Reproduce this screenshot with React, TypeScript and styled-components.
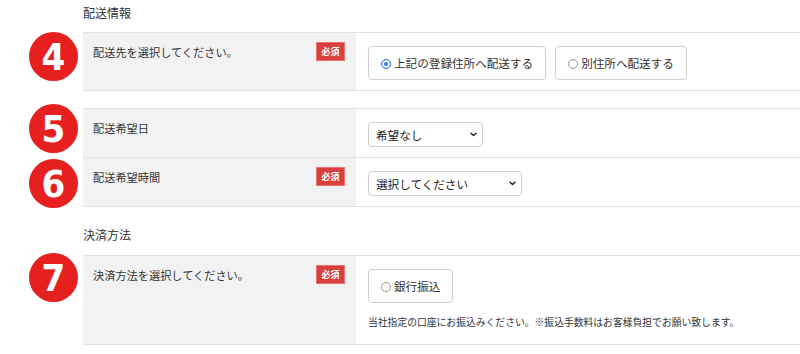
import React from "react";
import styled, { createGlobalStyle } from "styled-components";

const GlobalStyle = createGlobalStyle`
  html, body {
    margin: 0;
    padding: 0;
    background: #fff;
  }
  body {
    font-family: "Noto Sans CJK JP", "Noto Sans", sans-serif;
    color: #333;
  }
`;

function App() {
  return (
    <Page>
      <GlobalStyle />
      <Heading>配送情報</Heading>
      <Table>
        <Step n={4} first label="配送先を選択してください。" required>
          <Options>
            <Choice>
              <Radio $checked />
              上記の登録住所へ配送する
            </Choice>
            <Choice>
              <Radio />
              別住所へ配送する
            </Choice>
          </Options>
        </Step>
      </Table>

      <Table $gap>
        <Step n={5} first shift={-4} label="配送希望日">
          <Select $width={115}>
            希望なし
            <Chevron />
          </Select>
        </Step>
        <Step n={6} shift={1} label="配送希望時間" required>
          <Select $width={154}>
            選択してください
            <Chevron />
          </Select>
        </Step>
      </Table>

      <Heading $second>決済方法</Heading>
      <Table>
        <Step n={7} first shift={-2} label="決済方法を選択してください。" required>
          <Options>
            <Choice>
              <Radio />
              銀行振込
            </Choice>
          </Options>
          <Note>
            当社指定の口座にお振込みください。※振込手数料はお客様負担でお願い致します。
          </Note>
        </Step>
      </Table>
    </Page>
  );
}

type StepProps = {
  n: number;
  label: string;
  required?: boolean;
  first?: boolean;
  shift?: number;
  children: React.ReactNode;
};

function Step({ n, label, required, first, shift = 0, children }: StepProps) {
  return (
    <StepRow>
      <Marker>
        <Circle $shift={shift}>{n}</Circle>
      </Marker>
      <Row $first={first}>
        <LabelCell>
          <span>{label}</span>
          {required && <Badge>必須</Badge>}
        </LabelCell>
        <ValueCell>{children}</ValueCell>
      </Row>
    </StepRow>
  );
}

function Chevron() {
  return (
    <ChevronIcon width="7" height="5" viewBox="0 0 7 5">
      <path d="M1 1.2 L3.5 3.6 L6 1.2" fill="none" stroke="#222" strokeWidth="1.4" strokeLinecap="round" strokeLinejoin="round" />
    </ChevronIcon>
  );
}

const Page = styled.div`
  width: 800px;
  height: 354px;
  overflow: hidden;
`;

const Heading = styled.div<{ $second?: boolean }>`
  margin: ${(p) => (p.$second ? "19px" : "4px")} 0 ${(p) => (p.$second ? "11px" : "10px")} 83px;
  font-size: 12px;
  line-height: 18px;
  color: #333;
`;

const Table = styled.div<{ $gap?: boolean }>`
  display: flex;
  flex-direction: column;
  margin-top: ${(p) => (p.$gap ? "17px" : "0")};
`;

const StepRow = styled.div`
  display: grid;
  grid-template-columns: 83px 1fr;
`;

const Marker = styled.div`
  height: 0;
  overflow: visible;
  padding-left: 29px;
`;

const Circle = styled.div<{ $shift: number }>`
  margin-top: ${(p) => p.$shift}px;
  width: 49px;
  height: 49px;
  border-radius: 50%;
  background: #e6201f;
  color: #fff;
  display: flex;
  align-items: center;
  justify-content: center;
  font-family: "DejaVu Sans Condensed", "DejaVu Sans", sans-serif;
  font-weight: bold;
  font-size: 38px;
  line-height: 1;
`;

const Row = styled.div<{ $first?: boolean }>`
  display: grid;
  grid-template-columns: 273px 1fr;
  border-top: ${(p) => (p.$first ? "1px solid #e2e2e2" : "none")};
  border-bottom: 1px solid #e2e2e2;
`;

const LabelCell = styled.div`
  background: #f2f2f2;
  padding: 9px 11px 8px 10px;
  display: flex;
  align-items: flex-start;
  justify-content: space-between;
  font-size: 11.2px;
  line-height: 16px;
  color: #333;
  span {
    margin-top: 2px;
  }
`;

const Badge = styled.div`
  width: 29px;
  height: 19px;
  box-sizing: border-box;
  background: #d9403d;
  border: 1px solid #e87573;
  color: #fff;
  font-size: 9px;
  font-weight: bold;
  line-height: 17px;
  text-align: center;
`;

const ValueCell = styled.div`
  background: #fff;
  padding: 13px 12px 10px 12px;
`;

const Options = styled.div`
  display: flex;
  gap: 9px;
`;

const Choice = styled.div`
  display: flex;
  align-items: center;
  gap: 3px;
  height: 34px;
  box-sizing: border-box;
  padding: 0 12px 0 12px;
  border: 1px solid #d0d0d0;
  border-radius: 4px;
  background: #fff;
  font-size: 11.6px;
  color: #333;
  white-space: nowrap;
`;

const Radio = styled.span<{ $checked?: boolean }>`
  display: inline-block;
  width: 10px;
  height: 10px;
  border-radius: 50%;
  box-sizing: border-box;
  border: 1px solid ${(p) => (p.$checked ? "#2a7cf0" : "#9a9a9a")};
  background: ${(p) => (p.$checked ? "#2a7cf0" : "#fff")};
  box-shadow: ${(p) => (p.$checked ? "inset 0 0 0 2px #fff" : "none")};
  margin-top: 1px;
`;

const Select = styled.div<{ $width: number }>`
  width: ${(p) => p.$width}px;
  height: 25px;
  box-sizing: border-box;
  padding: 0 5px 0 7px;
  display: flex;
  align-items: center;
  justify-content: space-between;
  border: 1px solid #d0d0d0;
  border-radius: 4px;
  background: #fff;
  font-size: 11.6px;
  color: #222;
`;

const ChevronIcon = styled.svg`
  display: block;
`;

const Note = styled.div`
  margin: 12px 0 5px;
  font-size: 9.8px;
  line-height: 14px;
  color: #333;
`;

export default App;
